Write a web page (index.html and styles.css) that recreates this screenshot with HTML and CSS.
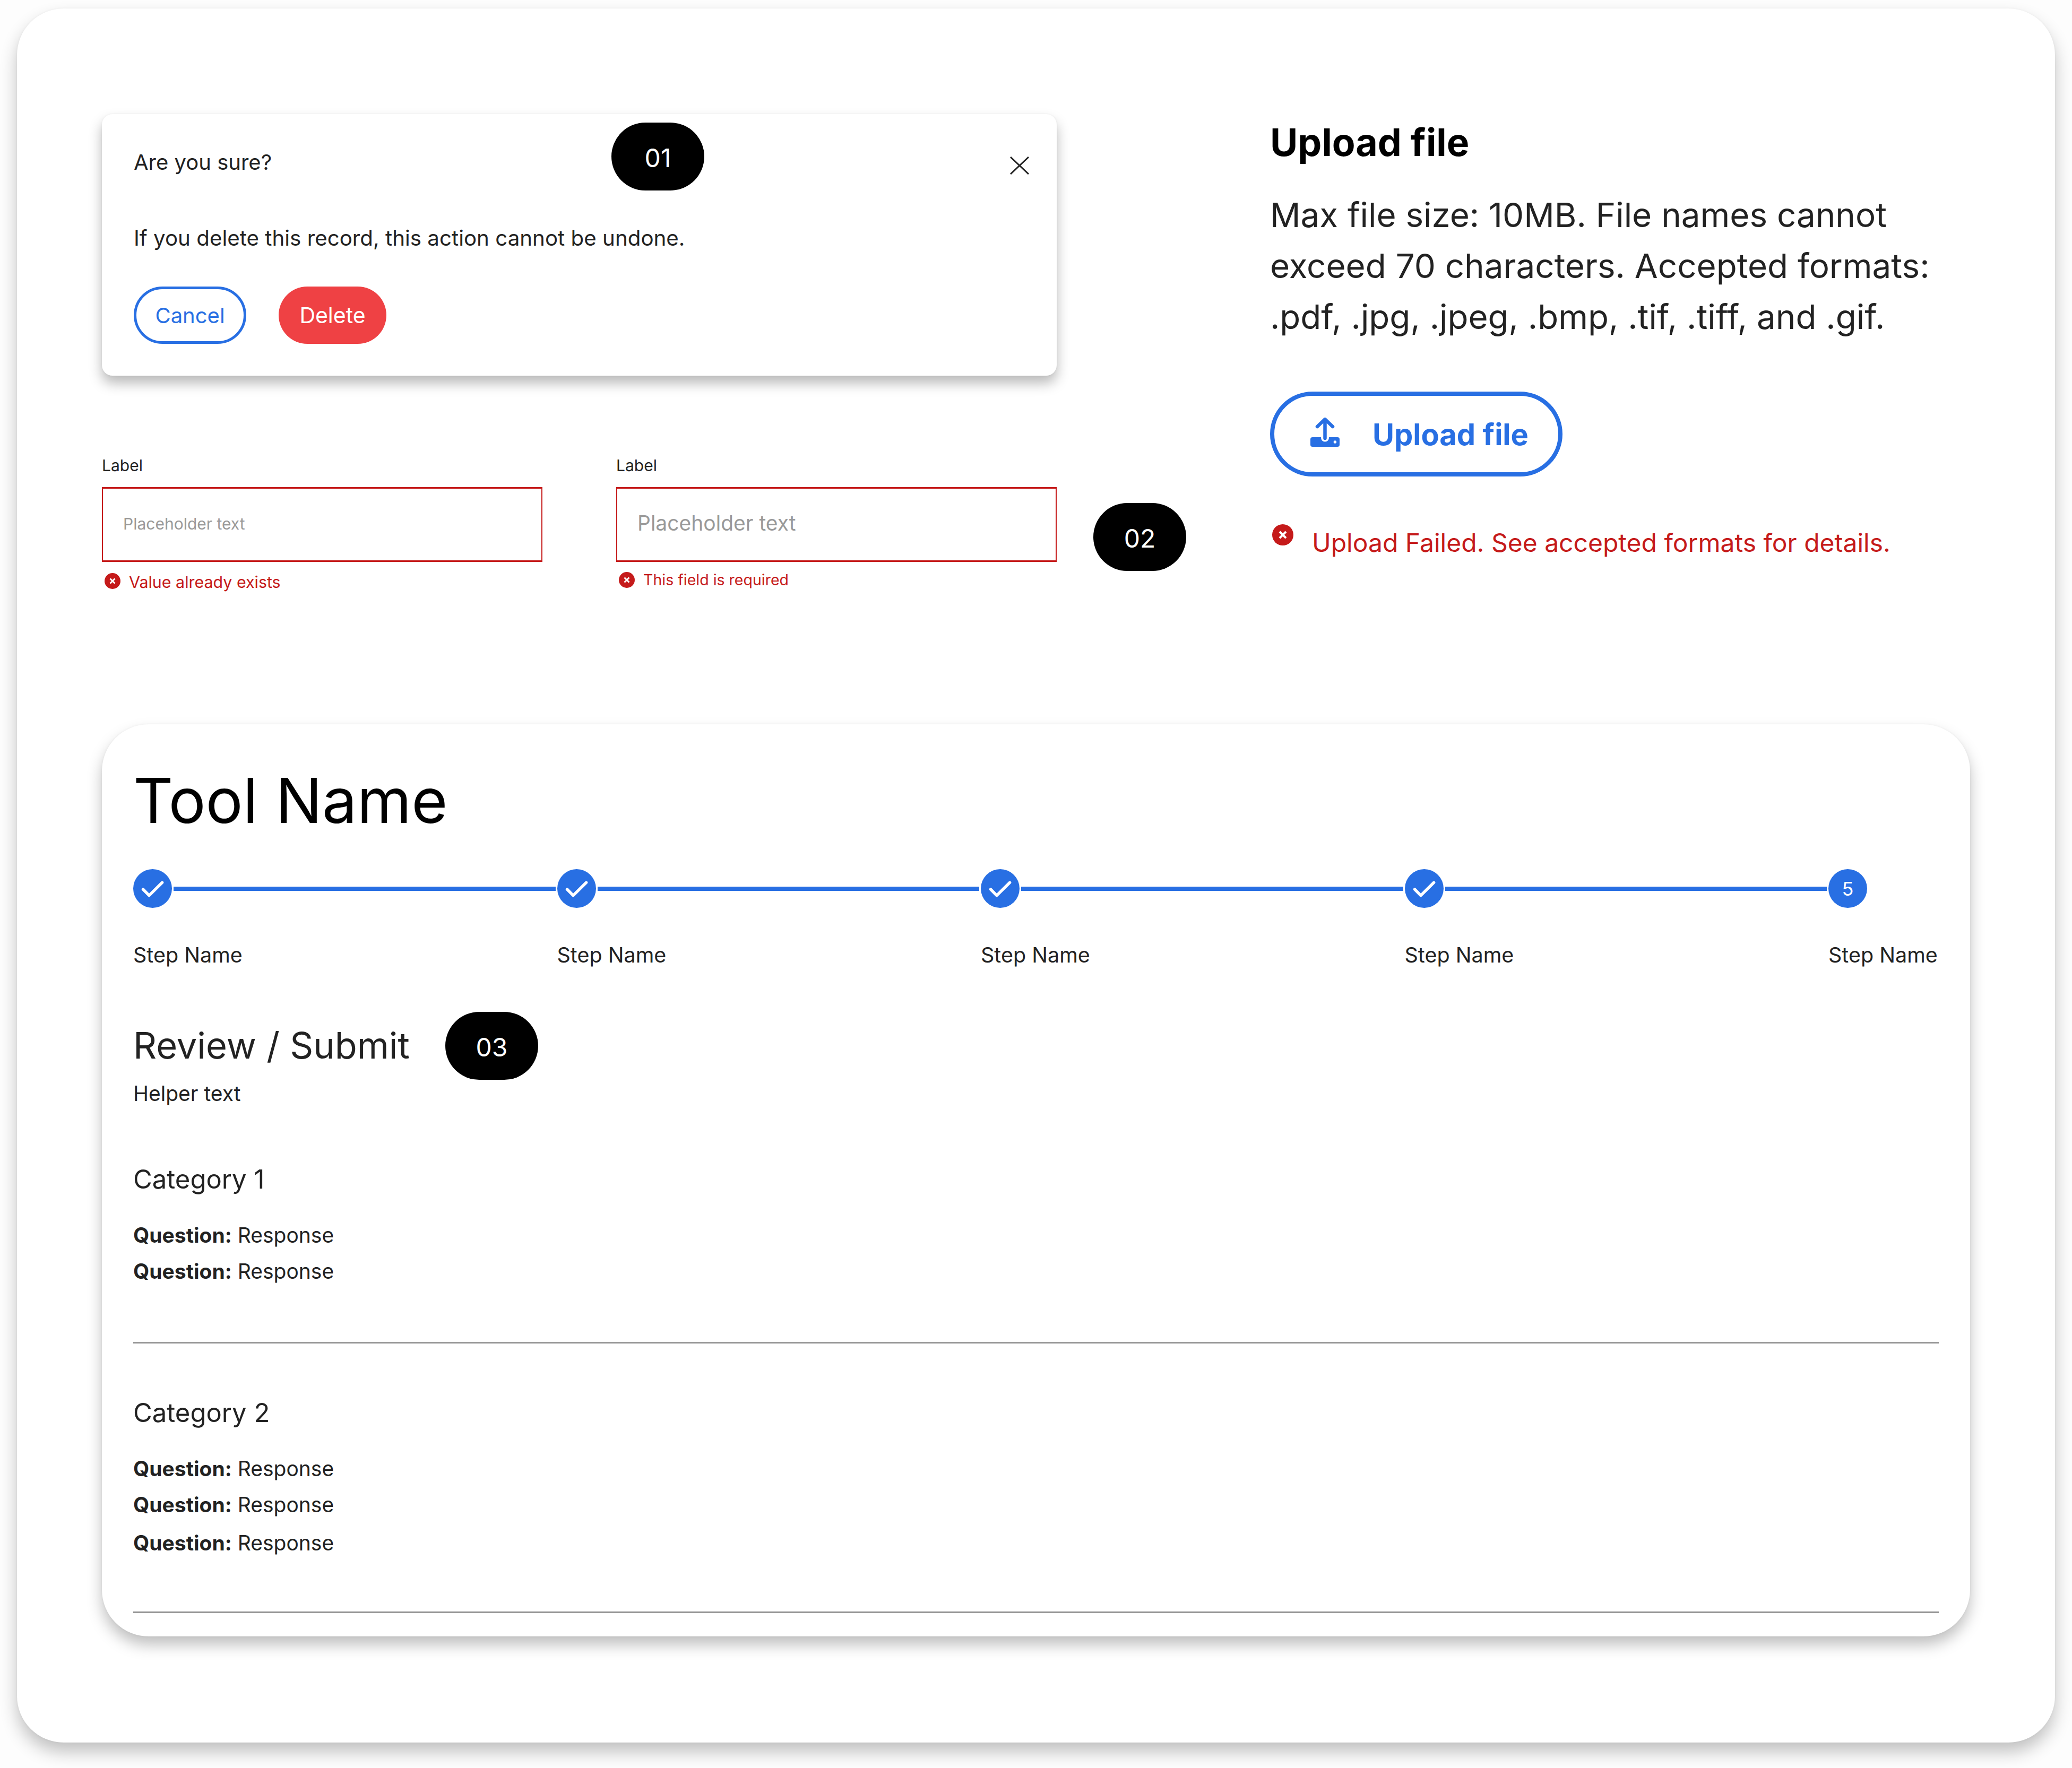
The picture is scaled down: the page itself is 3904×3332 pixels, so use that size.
FILE: index.html
```html
<!DOCTYPE html>
<html lang="en">
<head>
  <meta charset="UTF-8" />
  <title>Error states and review step</title>
  <link rel="stylesheet" href="styles.css">
</head>
<body>

<div class="frame">
  <div class="top-row">
    <div class="left-col">
      <div class="modal">
        <span class="pill pill-over">01</span>
        <div class="modal-head">
          <p class="modal-title">Are you sure?</p>
          <svg class="close-icon" viewBox="0 0 36 34" aria-label="Close"><path d="M1 1L35 33M35 1L1 33" /></svg>
        </div>
        <p class="modal-text">If you delete this record, this action cannot be undone.</p>
        <div class="modal-actions">
          <button class="btn btn-cancel">Cancel</button>
          <button class="btn btn-delete">Delete</button>
        </div>
      </div>

      <div class="fields">
        <div class="field">
          <div class="field-label">Label</div>
          <div class="field-input">Placeholder text</div>
          <div class="field-error">
            <svg class="err-icon" viewBox="0 0 40 40"><circle cx="20" cy="20" r="20" /><path d="M14 14L26 26M26 14L14 26" /></svg>
            Value already exists
          </div>
        </div>
        <div class="field field-alt">
          <div class="field-label">Label</div>
          <div class="field-input">Placeholder text</div>
          <div class="field-error">
            <svg class="err-icon" viewBox="0 0 40 40"><circle cx="20" cy="20" r="20" /><path d="M14 14L26 26M26 14L14 26" /></svg>
            This field is required
          </div>
        </div>
        <span class="pill pill-fields">02</span>
      </div>
    </div>

    <div class="right-col">
      <h2 class="upload-title">Upload file</h2>
      <p class="upload-text">Max file size: 10MB. File names cannot exceed 70 characters. Accepted formats: .pdf, .jpg, .jpeg, .bmp, .tif, .tiff, and .gif.</p>
      <button class="btn-upload">
        <svg class="upload-icon" viewBox="0 0 55 55">
          <rect class="tray" x="0" y="37" width="55" height="18" rx="4" />
          <path class="halo" d="M27.5 28V38" />
          <path class="arrow" d="M13 17L27.5 3L42 17M27.5 4V39" />
          <circle class="hole" cx="46.4" cy="46" r="2.7" />
        </svg>
        Upload file
      </button>
      <div class="upload-error">
        <svg class="err-icon err-big" viewBox="0 0 40 40"><circle cx="20" cy="20" r="20" /><path d="M14 14L26 26M26 14L14 26" /></svg>
        <span>Upload Failed. See accepted formats for details.</span>
      </div>
    </div>
  </div>

  <div class="tool-card">
    <h1 class="tool-name">Tool Name</h1>

    <div class="stepper">
      <div class="step">
        <div class="step-track">
          <svg class="step-dot" viewBox="0 0 73 73"><circle cx="36.5" cy="36.5" r="36.5" /><path d="M18.6 38L30 49.6L54.6 25.3" /></svg>
          <span class="step-line"></span>
        </div>
        <div class="step-name">Step Name</div>
      </div>
      <div class="step">
        <div class="step-track">
          <svg class="step-dot" viewBox="0 0 73 73"><circle cx="36.5" cy="36.5" r="36.5" /><path d="M18.6 38L30 49.6L54.6 25.3" /></svg>
          <span class="step-line"></span>
        </div>
        <div class="step-name">Step Name</div>
      </div>
      <div class="step">
        <div class="step-track">
          <svg class="step-dot" viewBox="0 0 73 73"><circle cx="36.5" cy="36.5" r="36.5" /><path d="M18.6 38L30 49.6L54.6 25.3" /></svg>
          <span class="step-line"></span>
        </div>
        <div class="step-name">Step Name</div>
      </div>
      <div class="step">
        <div class="step-track">
          <svg class="step-dot" viewBox="0 0 73 73"><circle cx="36.5" cy="36.5" r="36.5" /><path d="M18.6 38L30 49.6L54.6 25.3" /></svg>
          <span class="step-line"></span>
        </div>
        <div class="step-name">Step Name</div>
      </div>
      <div class="step step-last">
        <div class="step-track">
          <span class="step-num">5</span>
        </div>
        <div class="step-name">Step Name</div>
      </div>
    </div>

    <div class="review-head">
      <h2 class="review-title">Review / Submit</h2>
      <span class="pill">03</span>
    </div>
    <p class="helper">Helper text</p>

    <section class="category category-1">
      <h3 class="category-title">Category 1</h3>
      <p class="qa"><b>Question:</b> Response</p>
      <p class="qa"><b>Question:</b> Response</p>
    </section>

    <section class="category">
      <h3 class="category-title">Category 2</h3>
      <p class="qa"><b>Question:</b> Response</p>
      <p class="qa"><b>Question:</b> Response</p>
      <p class="qa qa-gap"><b>Question:</b> Response</p>
    </section>
  </div>
</div>

</body>
</html>
```

FILE: styles.css
```css
* { box-sizing: border-box; }
body {
  margin: 0; padding: 16px 32px 48px; background: #fdfdfd; color: #222;
  font-family: 'Inter', sans-serif; width: 3904px; height: 3332px; overflow: hidden;
}
h1, h2, h3, p { margin: 0; font-weight: 400; }
.frame {
  height: 3268px; background: white; border-radius: 88px; padding: 199px 160px 0;
  box-shadow: 0 18px 32px rgba(0,0,0,0.24), 0 0 4px rgba(0,0,0,0.05);
}
.top-row { display: flex; height: 1150px; }
.left-col { width: 2044px; margin-right: 157px; }
.pill {
  display: inline-flex; align-items: center; justify-content: center;
  width: 175px; height: 128px; border-radius: 64px; padding-top: 5px;
  background: black; color: white; font-size: 48px;
}
/* Modal */
.modal {
  position: relative; width: 1799px; height: 493px; background: white; border-radius: 20px;
  padding: 66px 60px 0; box-shadow: 0 14px 24px rgba(0,0,0,0.28), 0 0 4px rgba(0,0,0,0.05);
}
.pill-over { position: absolute; left: 960px; top: 16px; }
.modal-head { display: flex; justify-content: space-between; align-items: flex-start; height: 50px; }
.modal-title { font-size: 40px; line-height: 50px; }
.close-icon { width: 36px; height: 34px; margin: 14px -8px 0 0; }
.close-icon path { fill: none; stroke: #222; stroke-width: 3; }
.modal-text { font-size: 40.3px; line-height: 50px; margin-top: 93px; }
.modal-actions { display: flex; gap: 61px; margin-top: 66px; }
.btn {
  height: 108px; border-radius: 54px; font: 40px 'Inter', sans-serif;
  display: flex; align-items: center; justify-content: center;
}
.btn-cancel { width: 212px; background: white; color: #286fe3; border: 5px solid #286fe3; }
.btn-delete { width: 203px; background: #ef4144; color: white; border: none; font-size: 41px; }
/* Fields */
.fields { display: flex; margin-top: 151px; }
.field { width: 830px; margin-right: 139px; }
.field-alt { margin-right: 69px; }
.field-label { font-size: 30px; line-height: 36px; height: 59px; }
.field-input {
  height: 141px; border: solid #c51a1a; border-width: 3px 2px; padding: 0 0 4px 38px;
  display: flex; align-items: center; color: #999; font-size: 30px;
}
.field-alt .field-input { font-size: 39px; padding-bottom: 6px; }
.field-error {
  display: flex; align-items: center; gap: 16px; margin: 18px 0 0 5px;
  color: #c51a1a; font-size: 30.4px; line-height: 40px;
}
.field-alt .field-error { font-size: 28.5px; margin-top: 14px; }
.err-icon { width: 30px; height: 30px; flex: none; }
.field-error .err-icon { margin-top: -4px; }
.field-alt .field-error .err-icon { margin-top: -1px; }
.err-icon circle { fill: #c51a1a; }
.err-icon path { fill: none; stroke: white; stroke-width: 4; }
.pill-fields { margin-top: 89px; flex: none; }
/* Upload */
.right-col { flex: 1; }
.upload-title { font-size: 71.5px; font-weight: 700; color: #000; line-height: 96px; margin-top: 5px; }
.upload-text { font-size: 63.7px; line-height: 96px; margin-top: 41px; width: 1300px; }
.btn-upload {
  display: flex; align-items: center; gap: 62px; width: 551px; height: 160px; margin-top: 93px;
  padding: 2px 0 0 68px; border: 8px solid #286fe3; border-radius: 80px; background: white;
  color: #286fe3; font: 700 56px 'Inter', sans-serif;
}
.upload-icon { width: 55px; height: 55px; flex: none; margin-top: -10px; }
.tray { fill: #286fe3; }
.hole { fill: white; }
.halo { stroke: white; stroke-width: 15; stroke-linecap: round; fill: none; }
.arrow { stroke: #286fe3; stroke-width: 6.5; stroke-linecap: round; stroke-linejoin: round; fill: none; }
.upload-error {
  display: flex; align-items: flex-start; gap: 35px; margin: 79px 0 0 4px;
  color: #c51a1a; font-size: 48px; line-height: 70px;
}
.err-big { width: 40px; height: 40px; margin-top: 11px; }
.upload-error span { margin-top: 11px; }
/* Tool card */
.tool-card {
  height: 1719px; background: white; border-radius: 88px; padding: 66px 59px 0;
  box-shadow: 0 16px 28px rgba(0,0,0,0.25), 0 0 4px rgba(0,0,0,0.05);
}
.tool-name { font-size: 117px; line-height: 156px; color: #000; }
.stepper { display: flex; margin-top: 51px; }
.step { flex: 1; }
.step-last { flex: none; width: 208px; }
.step-track { display: flex; align-items: center; gap: 3px; height: 73px; }
.step-dot { width: 73px; height: 73px; flex: none; }
.step-dot circle { fill: #286fe3; }
.step-dot path { fill: none; stroke: white; stroke-width: 5.5; stroke-linecap: round; stroke-linejoin: round; }
.step-line { flex: 1; height: 8px; background: #286fe3; margin-right: 3px; }
.step-num {
  width: 73px; height: 73px; border-radius: 50%; background: #286fe3; color: white;
  display: flex; align-items: center; justify-content: center; font-size: 36px;
}
.step-name { font-size: 39.5px; line-height: 50px; margin-top: 64px; white-space: nowrap; }
.review-head { display: flex; align-items: center; gap: 67px; margin-top: 82px; }
.review-title { font-size: 68.6px; line-height: 128px; }
.helper { font-size: 39px; line-height: 50px; margin-top: 1px; }
.category { border-bottom: 3px solid #999; padding: 101px 0 95px; }
.category-1 { padding-top: 107px; padding-bottom: 99px; }
.category-title { font-size: 49px; line-height: 60px; margin-bottom: 41px; }
.qa { font-size: 39px; line-height: 68px; }
.qa b { font-weight: 700; }
.qa-gap { margin-top: 4px; }
```
